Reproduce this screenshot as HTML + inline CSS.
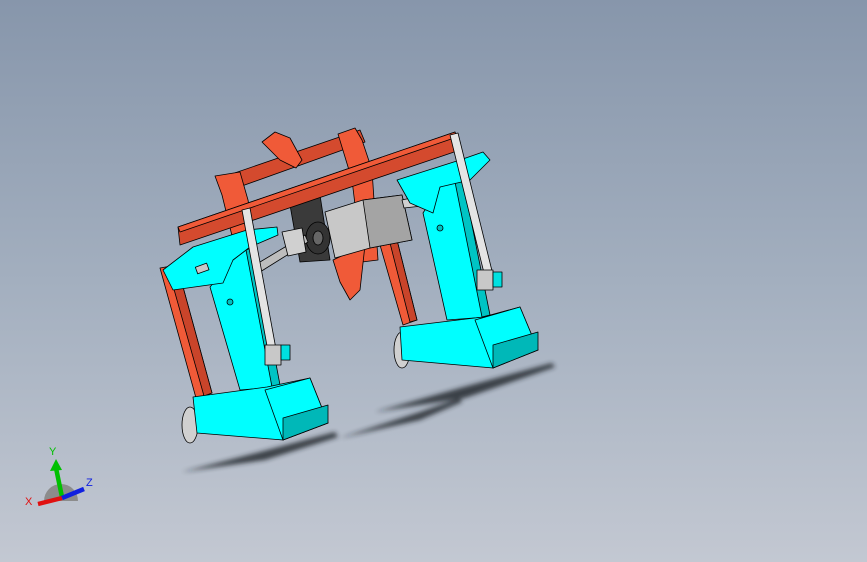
<!DOCTYPE html>
<html><head><meta charset="utf-8"><style>
html,body{margin:0;padding:0;width:867px;height:562px;overflow:hidden}
body{background:linear-gradient(180deg,#8796ab 0%,#a3afbf 50%,#c3c8d2 100%)}
svg{position:absolute;left:0;top:0}
text{font-family:"Liberation Sans",sans-serif;font-size:11px}
</style></head><body>
<svg width="867" height="562" viewBox="0 0 867 562">
<defs>
<filter id="b" x="-20%" y="-50%" width="140%" height="200%"><feGaussianBlur stdDeviation="2.5"/></filter>
</defs>
<!-- shadows -->
<g filter="url(#b)" fill="#1e2128" opacity="0.8">
<path d="M182,472 L260,452 L335,432 L338,437 L265,460 Z"/>
<path d="M340,438 L420,412 L460,398 L462,402 L420,420 Z"/>
<path d="M375,412 L460,388 L552,363 L555,367 L465,398 Z"/>
</g>
<g stroke="#000" stroke-width="0.8" stroke-linejoin="round">
<!-- back red frame -->
<path d="M220,178 L360,130 L365,142 L225,192 Z" fill="#d44a2e"/>
<path d="M215,176 L240,172 L248,200 L255,240 L235,248 L222,195 Z" fill="#f05a38"/>
<path d="M262,142 L275,132 L290,138 L302,160 L296,168 L280,160 Z" fill="#f05a38"/>
<path d="M338,134 L355,128 L362,140 L372,170 L378,260 L362,262 L352,180 Z" fill="#f05a38"/>
<!-- red vertical legs -->
<path d="M160,268 L177,265 L212,393 L196,398 Z" fill="#f05a38"/>
<path d="M168,268 L177,265 L212,393 L204,396 Z" fill="#c9442a"/>
<path d="M380,245 L397,240 L417,320 L403,325 Z" fill="#f05a38"/>
<path d="M390,243 L397,240 L417,320 L410,322 Z" fill="#c9442a"/>
<!-- center blade -->
<path d="M333,260 L365,245 L360,290 L350,300 L340,282 Z" fill="#f05a38"/>
<!-- black bearing -->
<path d="M290,205 L320,195 L330,260 L300,262 Z" fill="#3a3a3a"/>
<ellipse cx="318" cy="238" rx="12" ry="16" fill="#333"/>
<ellipse cx="318" cy="238" rx="5" ry="7" fill="#666"/>
<!-- shaft -->
<path d="M255,265 L305,235 L308,242 L260,272 Z" fill="#bdbdbd"/>
<path d="M282,232 L302,228 L306,252 L288,256 Z" fill="#d0d0d0"/>
<!-- grey box -->
<path d="M325,212 L363,200 L402,195 L412,240 L370,248 L335,258 Z" fill="#c8c8c8"/>
<path d="M363,200 L402,195 L412,240 L370,248 Z" fill="#a4a4a4"/>
<path d="M402,200 L420,196 L422,206 L404,208 Z" fill="#cfcfcf"/>
<!-- main red beam -->
<path d="M178,227 L455,132 L460,150 L180,245 Z" fill="#d44a2e"/>
<path d="M178,227 L455,132 L457,137 L180,232 Z" fill="#f05a38"/>
<!-- right leg -->
<path d="M423,213 L440,187 L460,180 L487,317 L447,320 Z" fill="#00ffff"/>
<path d="M455,182 L463,180 L490,315 L482,317 Z" fill="#00c4c4"/>
<path d="M397,180 L460,160 L483,152 L490,160 L470,180 L440,187 L433,213 L410,203 Z" fill="#00ffff"/>
<circle cx="440" cy="228" r="3" fill="#00c0c0"/>
<!-- right foot -->
<ellipse cx="402" cy="350" rx="8" ry="18" fill="#d0d0d0"/>
<path d="M400,327 L483,317 L520,307 L538,350 L493,368 L402,360 Z" fill="#00ffff"/>
<path d="M475,320 L520,307 L538,350 L493,368 Z" fill="#00ffff"/>
<path d="M493,345 L538,332 L538,350 L493,368 Z" fill="#00b8b8"/>
<!-- left leg -->
<path d="M210,287 L233,260 L250,247 L277,387 L240,390 Z" fill="#00ffff"/>
<path d="M246,250 L254,247 L280,385 L272,387 Z" fill="#00c4c4"/>
<path d="M163,270 L193,247 L247,230 L277,227 L278,235 L250,247 L233,260 L223,283 L173,290 Z" fill="#00ffff"/>
<rect x="196" y="265" width="12" height="7" fill="#c8c8c8" transform="rotate(-20 202 268)"/>
<circle cx="230" cy="302" r="3" fill="#00c0c0"/>
<!-- left foot -->
<ellipse cx="190" cy="425" rx="8" ry="18" fill="#d0d0d0"/>
<path d="M193,397 L267,387 L310,378 L328,423 L283,440 L197,433 Z" fill="#00ffff"/>
<path d="M265,390 L310,378 L328,423 L283,440 Z" fill="#00ffff"/>
<path d="M283,418 L328,405 L328,423 L283,440 Z" fill="#00b8b8"/>
<!-- screws -->
<path d="M242,210 L250,208 L278,360 L270,362 Z" fill="#e4e4e4"/>
<path d="M450,135 L458,133 L493,275 L485,277 Z" fill="#e4e4e4"/>
<!-- screw blocks -->
<rect x="265" y="345" width="16" height="20" fill="#c8c8c8"/>
<rect x="281" y="345" width="9" height="15" fill="#00e0e0"/>
<rect x="477" y="270" width="16" height="20" fill="#c8c8c8"/>
<rect x="493" y="272" width="9" height="15" fill="#00e0e0"/>
</g>
<!-- triad -->
<path d="M44,501 A17,17 0 0 1 78,501 Z" fill="#8c8c8c"/>
<line x1="62" y1="497" x2="56" y2="468" stroke="#00c000" stroke-width="4.5"/>
<path d="M50,471 L56,459 L62,470 Z" fill="#00c000"/>
<line x1="62" y1="498" x2="38" y2="504" stroke="#e01010" stroke-width="4.5"/>
<line x1="62" y1="498" x2="84" y2="489" stroke="#1020e0" stroke-width="4.5"/>
<text x="49" y="455" fill="#00c000">Y</text>
<text x="25" y="505" fill="#e01010">X</text>
<text x="86" y="486" fill="#1020e0">Z</text>
</svg>
</body></html>
